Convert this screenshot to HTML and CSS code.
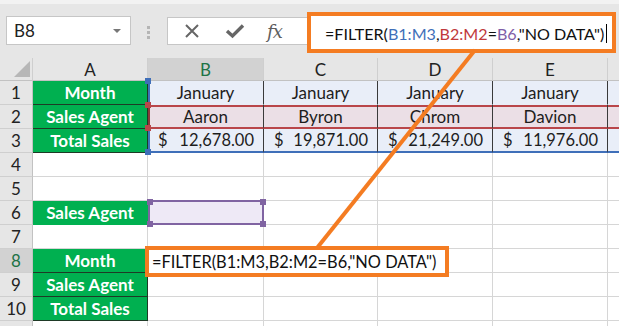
FILE: index.html
```html
<!DOCTYPE html>
<html>
<head>
<meta charset="utf-8">
<link rel="stylesheet" href="styles.css">
</head>
<body>
<div class="page">
  <div class="topbar">
    <div class="namebox"><span>B8</span><span class="ddarrow"></span></div>
    <div class="dots"><i></i><i></i><i></i></div>
    <div class="fbar">
      <div class="ficons">
        <svg class="ico" width="16" height="16" viewBox="0 0 16 16"><path d="M2 2 L14 14 M14 2 L2 14" stroke="#666" stroke-width="2" fill="none"/></svg>
        <svg class="ico" width="20" height="16" viewBox="0 0 20 16"><path d="M2 8 L7.5 13 L18 2.5" stroke="#666" stroke-width="3.4" fill="none"/></svg>
        <span class="fx">fx</span>
      </div>
      <div class="finput">
        <span class="ftext">=FILTER(<span class="c-blue">B1:M3</span>,<span class="c-red">B2:M2</span>=<span class="c-purple">B6</span>,"NO DATA")</span><span class="caret"></span>
      </div>
    </div>
  </div>

  <div class="sheet">
    <div class="hd corner"><span class="tri"></span></div>
    <div class="hd">A</div>
    <div class="hd sel">B</div>
    <div class="hd">C</div>
    <div class="hd">D</div>
    <div class="hd">E</div>
    <div class="hd"></div>

    <div class="rh">1</div>
    <div class="c green bx">Month</div>
    <div class="c r1 first"><span class="h h-tl blue"></span>January</div>
    <div class="c r1">January</div>
    <div class="c r1">January</div>
    <div class="c r1">January</div>
    <div class="c r1 last"></div>

    <div class="rh">2</div>
    <div class="c green bx">Sales Agent</div>
    <div class="c r2 first"><span class="h h-tl red"></span><span class="h h-bl red"></span>Aaron</div>
    <div class="c r2">Byron</div>
    <div class="c r2">Chrom</div>
    <div class="c r2">Davion</div>
    <div class="c r2 last"></div>

    <div class="rh">3</div>
    <div class="c green bx">Total Sales</div>
    <div class="c r3 acc first"><span class="h h-bl blue"></span><span>$</span><span>12,678.00</span></div>
    <div class="c r3 acc"><span>$</span><span>19,871.00</span></div>
    <div class="c r3 acc"><span>$</span><span>21,249.00</span></div>
    <div class="c r3 acc"><span>$</span><span>11,976.00</span></div>
    <div class="c r3 acc last"><span class="dol">$</span></div>

    <div class="rh">4</div>
    <div class="c"></div><div class="c"></div><div class="c"></div><div class="c"></div><div class="c"></div><div class="c"></div>

    <div class="rh">5</div>
    <div class="c"></div><div class="c"></div><div class="c"></div><div class="c"></div><div class="c"></div><div class="c"></div>

    <div class="rh">6</div>
    <div class="c green">Sales Agent</div>
    <div class="c crit"><span class="h h-tl purple"></span><span class="h h-tr purple"></span><span class="h h-bl purple"></span><span class="h h-br purple"></span></div>
    <div class="c"></div><div class="c"></div><div class="c"></div><div class="c"></div>

    <div class="rh">7</div>
    <div class="c"></div><div class="c"></div><div class="c"></div><div class="c"></div><div class="c"></div><div class="c"></div>

    <div class="rh sel">8</div>
    <div class="c green bx">Month</div>
    <div class="c b8"><div class="callout">=FILTER(B1:M3,B2:M2=B6,"NO DATA")</div></div>
    <div class="c"></div><div class="c"></div><div class="c"></div><div class="c"></div>

    <div class="rh">9</div>
    <div class="c green bx">Sales Agent</div>
    <div class="c"></div><div class="c"></div><div class="c"></div><div class="c"></div><div class="c"></div>

    <div class="rh">10</div>
    <div class="c green bx">Total Sales</div>
    <div class="c"></div><div class="c"></div><div class="c"></div><div class="c"></div><div class="c"></div>

    <div class="rh"></div>
    <div class="c"></div><div class="c"></div><div class="c"></div><div class="c"></div><div class="c"></div><div class="c"></div>
  </div>

  <svg class="connector" width="619" height="326" viewBox="0 0 619 326"><line x1="475" y1="50" x2="317" y2="248" stroke="#f47c22" stroke-width="4"/></svg>
</div>
</body>
</html>
```

FILE: styles.css
```css
* { box-sizing: border-box; }
html, body { margin: 0; padding: 0; }
body {
  width: 619px;
  height: 326px;
  overflow: hidden;
  background: #e6e6e6;
  font-family: Lato, "Open Sans", sans-serif;
}
.page { position: relative; width: 619px; height: 326px; overflow: hidden; }

.topbar {
  height: 58px;
  display: flex;
  align-items: flex-start;
  padding: 8px 3px 0 6px;
  border-top: 4px solid #f2f2f2;
}
.namebox {
  margin-top: 4px;
  width: 127px;
  height: 29px;
  background: #fff;
  border: 1px solid #c6c6c6;
  display: flex;
  align-items: center;
  justify-content: space-between;
  padding: 0 9px 0 7px;
  font-size: 17px;
  color: #222;
}
.ddarrow {
  width: 0; height: 0;
  border-left: 4px solid transparent;
  border-right: 4px solid transparent;
  border-top: 4px solid #777;
}
.dots {
  width: 37px;
  display: flex;
  flex-direction: column;
  align-items: center;
  gap: 2px;
  margin-top: 14px;
}
.dots i { display: block; width: 3px; height: 3px; background: #b5b5b5; }
.fbar { display: flex; align-items: flex-start; }
.ficons {
  margin-top: 5px;
  width: 140px;
  height: 28px;
  background: #fff;
  border: 1px solid #c6c6c6;
  border-right: none;
  display: flex;
  align-items: center;
  padding-left: 16px;
}
.ficons .ico:nth-child(1) { margin-right: 25px; }
.ficons .ico:nth-child(2) { margin-right: 22px; }
.fx {
  font-family: "DejaVu Serif", "Liberation Serif", serif;
  font-style: italic;
  font-size: 18px;
  color: #5e5e5e;
  letter-spacing: -1px;
}
.finput {
  width: 309px;
  height: 41px;
  background: #fff;
  border: 4px solid #f47c22;
  display: flex;
  align-items: center;
  padding: 2px 0 0 14px;
  font-size: 16.1px;
  color: #111;
}
.ftext { white-space: nowrap; }
.caret { display: inline-block; width: 1px; height: 19px; background: #000; margin-left: 2px; }
.c-blue { color: #3f6fb9; }
.c-red { color: #c0393b; }
.c-purple { color: #7f5fa8; }

.sheet {
  display: grid;
  grid-template-columns: 33px 115px 116px 114px 115px 115px 111px;
  grid-template-rows: 23px;
  grid-auto-rows: 24px;
  background: #fff;
  font-size: 17px;
  color: #1d1d1d;
}
.hd {
  background: #e6e6e6;
  border-right: 1px solid #cfcfcf;
  border-bottom: 1px solid #c2c2c2;
  display: flex;
  align-items: center;
  justify-content: center;
  color: #222;
}
.hd.sel { background: #d2d2d2; color: #217346; }
.corner { position: relative; }
.tri {
  position: absolute;
  right: 2px; bottom: 3px;
  width: 0; height: 0;
  border-left: 16px solid transparent;
  border-bottom: 16px solid #b7b7b7;
}
.rh {
  background: #e6e6e6;
  border-right: 1px solid #c2c2c2;
  border-bottom: 1px solid #cfcfcf;
  display: flex;
  align-items: center;
  justify-content: center;
  color: #222;
}
.rh.sel { background: #d2d2d2; color: #217346; }
.c {
  position: relative;
  border-right: 1px solid #d6d6d6;
  border-bottom: 1px solid #d6d6d6;
  display: flex;
  align-items: center;
  justify-content: center;
  white-space: nowrap;
}
.green {
  background: #00b050;
  color: #fff;
  font-weight: bold;
  border-color: #00b050;
}
.green.bx { border-right: 1px solid #1e3a26; border-bottom: 1px solid #1e3a26; }
.r1, .r3 { background: #e9eef8; border-right: 1px solid #3a3a3a; }
.r2 { background: #ebdfe6; border-right: 1px solid #3a3a3a; box-shadow: inset 0 2px 0 #b9464a; border-bottom: 2px solid #b9464a; }
.r1 { border-bottom: 1px solid transparent; }
.r3 { border-bottom: 2px solid #3f6fb9; }
.r1.first, .r3.first { box-shadow: inset 2px 0 0 #3f6fb9; }
.r2.first { box-shadow: inset 0 2px 0 #b9464a, inset 2px 0 0 #8a3a3a; }
.last { border-right: none; overflow: hidden; justify-content: flex-start; }
.acc { justify-content: space-between; padding: 0 9px 0 10px; font-size: 16.5px; }
.dol { color: #cc5a1a; margin-left: 8px; }

.h { position: absolute; width: 6px; height: 6px; z-index: 2; }
.h-tl { left: -3px; top: -3px; }
.h-bl { left: -3px; bottom: -4px; }
.h-tr { right: -4px; top: -3px; }
.h-br { right: -4px; bottom: -4px; }
.blue { background: #3f6fb9; }
.red { background: #b9464a; }
.purple { background: #8064a2; }

.crit { background: #eee9f6; border: 2px solid #8064a2; margin: -1px 0 0 0; }

.b8 { overflow: visible; z-index: 3; }
.callout {
  position: absolute;
  left: -3px;
  top: -3px;
  width: 304px;
  height: 31px;
  background: #fff;
  border: 4px solid #f47c22;
  padding-left: 3px;
  display: flex;
  align-items: center;
  font-size: 16.4px;
  color: #111;
}
.connector { position: absolute; left: 0; top: 0; pointer-events: none; z-index: 5; }
```
